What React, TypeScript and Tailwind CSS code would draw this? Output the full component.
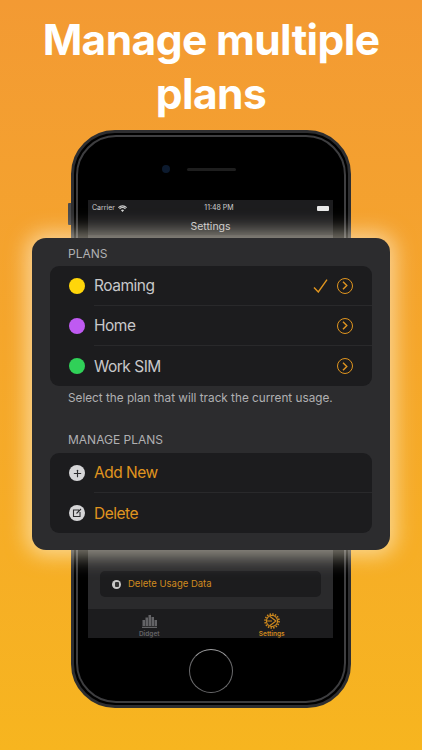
import { Plus } from 'lucide-react';

const font = { fontFamily: 'Inter, "Liberation Sans", sans-serif' };

function Disclosure() {
  return (
    <span className="flex h-[16px] w-[16px] items-center justify-center rounded-full border-[1.5px] border-[#e0951f]">
      <svg width="6" height="9" viewBox="0 0 6 9" fill="none" stroke="#e0951f" strokeWidth="1.400">
        <path d="M1 .8 4.800 4.500 1 8.200" />
      </svg>
    </span>
  );
}

function PlanRow({ color, name, selected, last }: { color: string; name: string; selected?: boolean; last?: boolean }) {
  return (
    <div className="flex h-[40px] items-center pl-[19px]">
      <span className="h-[16px] w-[16px] rounded-full" style={{ background: color }} />
      <div className={`ml-[9px] flex h-full flex-1 items-center pr-[19px] ${last ? '' : 'border-b border-[#29292b]'}`}>
        <span className="flex-1 pt-[1px] text-[15.5px] tracking-[-0.5px] text-[#c8c8ca]">{name}</span>
        {selected && (
          <svg width="15" height="14" viewBox="0 0 15 14" fill="none" stroke="#e0951f" strokeWidth="1.400" className="mr-[9px]">
            <path d="M1 8.500 5.300 13 14 .6" />
          </svg>
        )}
        <Disclosure />
      </div>
    </div>
  );
}

function GlyphDot({ children }: { children: React.ReactNode }) {
  return (
    <span className="flex h-[16px] w-[16px] items-center justify-center rounded-full bg-[#d6d6d8] text-[#2c2c2e]">
      {children}
    </span>
  );
}

export default function App() {
  return (
    <div
      className="relative flex h-[750px] w-[422px] flex-col items-center overflow-hidden bg-gradient-to-b from-[#f39a33] to-[#f7b51f]"
      style={font}
    >
      <h1 className="mt-[13px] text-center text-[42.5px] font-bold leading-[54px] tracking-[-0.6px] text-white">
        Manage multiple
        <br />
        plans
      </h1>

      {/* phone */}
      <div className="relative mt-[9px] flex h-[578px] w-[280px] flex-col items-center rounded-[44px] border-[3px] border-[#2e2e30] bg-black">
        <span className="absolute left-[-6px] top-[70px] h-[22px] w-[3px] rounded-l-[1px] bg-[#4a4a4c]" />
        <span className="absolute inset-[2px] rounded-[40px] border-2 border-[#3e3e40]" />
        <div className="relative mr-[24px] mt-[32px] flex items-center">
          <span className="h-[8px] w-[8px] rounded-full bg-[#0c1a2e]" />
          <span className="ml-[17px] h-[3px] w-[49px] rounded-full bg-[#1e1e1e]" />
        </div>
        <div className="relative mr-[1px] mt-[27px] flex h-[438px] w-[245px] flex-col bg-[#1c1c1e]">
          <div className="flex h-[14px] shrink-0 items-center justify-between px-[4px] pt-[3px] text-[7px] text-[#d0d0d0]">
            <span className="flex items-center gap-[3px]">
              Carrier
              <svg width="9" height="7" viewBox="0 0 12 9" fill="#d0d0d0">
                <path d="M6 9 3.900 6.800a3 3 0 0 1 4.200 0ZM2.600 5.500 1.500 4.400a6.400 6.400 0 0 1 9 0L9.400 5.500a4.800 4.800 0 0 0-6.800 0ZM.9 3.800 0 2.800a8.500 8.500 0 0 1 12 0l-.9 1a7.200 7.200 0 0 0-10.200 0Z" />
              </svg>
            </span>
            <span className="ml-[-6px]">11:48 PM</span>
            <span className="h-[5px] w-[12px] rounded-[1px] bg-[#e8e8e8]" />
          </div>
          <div className="pt-[5px] text-center text-[10.5px] text-[#c8c8ca]">Settings</div>
          <div className="flex-1 bg-[#2a2a2c]" />
          <div className="bg-[#2a2a2c] px-[12px] pb-[12px]">
            <div className="flex h-[26px] items-center rounded-[5px] bg-[#1c1c1e] pl-[12px] text-[9.5px] text-[#d08a1e]">
              <span className="flex h-[9px] w-[9px] items-center justify-center rounded-full bg-[#c8c8c8]">
                <span className="h-[5px] w-[4px] rounded-[1px] bg-[#333]" />
              </span>
              <span className="ml-[7px]">Delete Usage Data</span>
            </div>
          </div>
          <div className="flex h-[29px] shrink-0 bg-[#1c1c1e]">
            <div className="flex flex-1 flex-col items-center justify-end text-[6.5px] font-semibold text-[#636366]">
              <svg width="15" height="13" viewBox="0 0 15 13" fill="#636366">
                <path d="M.5 5h2.500v6H.5zM3.500 2.500H6V11H3.500zM6.500 0H9v11H6.500zM9.500 2H12v9H9.500zM12.500 5H15v6h-2.500zM0 11.800h15V13H0z" />
              </svg>
              <span className="mt-[2px] leading-[8px]">Didget</span>
            </div>
            <div className="flex flex-1 flex-col items-center justify-end text-[6.5px] font-semibold text-[#d08a1e]">
              <svg width="16" height="16" viewBox="0 0 16 16" fill="none" stroke="#d08a1e" strokeWidth="1.100">
                <circle cx="8" cy="8" r="7" strokeWidth="1.600" strokeDasharray="1.500 1.250" />
                <circle cx="8" cy="8" r="5.600" />
                <path d="M6 3.500 12 8l-6 4.500M8 8H2.500" />
              </svg>
              <span className="mt-[1px] leading-[8px]">Settings</span>
            </div>
          </div>
        </div>
        <div className="relative mt-[11px] h-[44px] w-[44px] rounded-full border-[1.5px] border-[#6a6a6c] border-t-[#a0a0a2]" />
      </div>

      {/* overlay card */}
      <div className="absolute left-[32px] top-[238px] h-[312px] w-[358px] rounded-[14px] bg-[#2c2c2e] px-[18px] pt-[9px] shadow-[0_0_20px_6px_rgba(255,248,225,0.55)]">
        <div className="pl-[18px] text-[12px] leading-[14px] text-[#b0b0b2]">PLANS</div>
        <div className="mt-[5px] rounded-[9px] bg-[#1c1c1e]">
          <PlanRow color="#ffd60a" name="Roaming" selected />
          <PlanRow color="#bf5af2" name="Home" />
          <PlanRow color="#30d158" name="Work SIM" last />
        </div>
        <div className="mt-[4px] pl-[18px] text-[11.75px] leading-[16px] text-[#b0b0b2]">
          Select the plan that will track the current usage.
        </div>
        <div className="mt-[27px] pl-[18px] text-[12px] leading-[14px] text-[#b0b0b2]">MANAGE PLANS</div>
        <div className="mt-[6px] rounded-[9px] bg-[#1c1c1e]">
          <div className="flex h-[40px] items-center pl-[19px]">
            <GlyphDot>
              <Plus size={11} strokeWidth={2.5} />
            </GlyphDot>
            <div className="ml-[9px] flex h-full flex-1 items-center border-b border-[#29292b] pt-[1px] text-[15.5px] tracking-[-0.5px] text-[#e0951f]">
              Add New
            </div>
          </div>
          <div className="flex h-[40px] items-center pl-[19px]">
            <GlyphDot>
              <svg width="10" height="10" viewBox="0 0 10 10" fill="none" stroke="currentColor" strokeWidth="1.100">
                <path d="M7 2H1.500v6.500H8V4M4.500 5.500 9 1" />
              </svg>
            </GlyphDot>
            <div className="ml-[9px] pt-[1px] text-[15.5px] tracking-[-0.5px] text-[#e0951f]">Delete</div>
          </div>
        </div>
      </div>
    </div>
  );
}
